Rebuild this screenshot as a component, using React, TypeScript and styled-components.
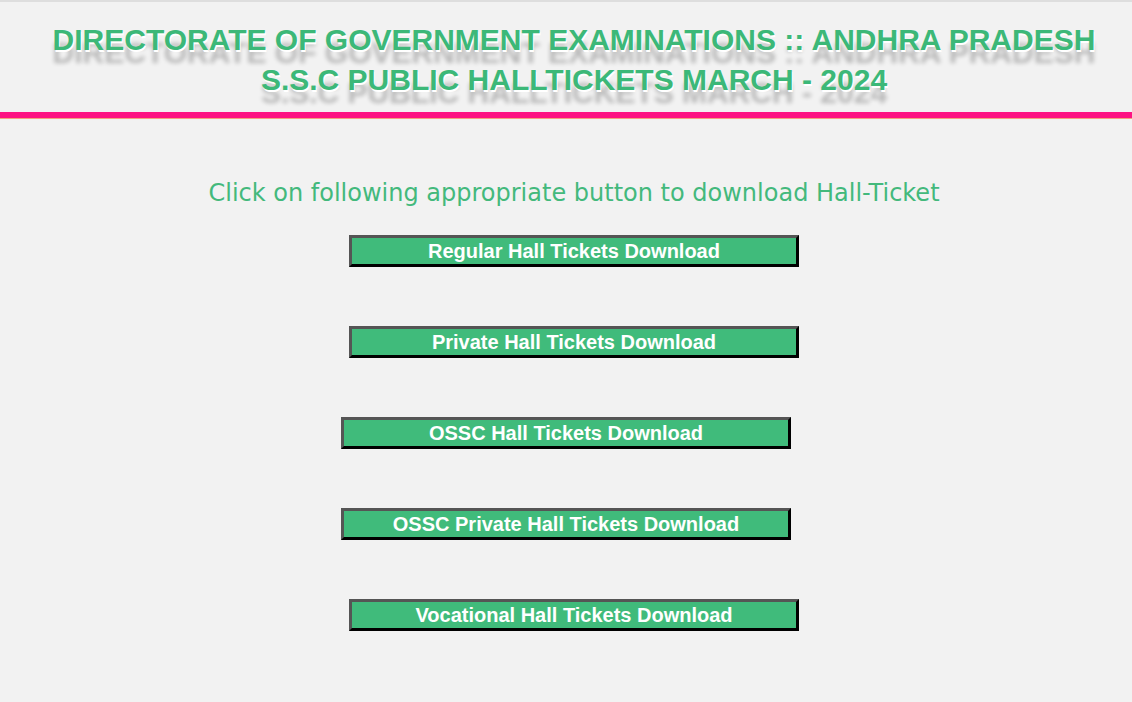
import styled, { createGlobalStyle } from "styled-components";

const GlobalStyle = createGlobalStyle`
  html, body {
    margin: 0;
    padding: 0;
    background: #f2f2f2;
  }
`;

const Page = styled.div`
  width: 100%;
  min-height: 702px;
  border-top: 2px solid #dedede;
  background: #f2f2f2;
`;

const Header = styled.header`
  height: 110px;
  padding-left: 16px;
  display: flex;
  flex-direction: column;
  justify-content: center;
  align-items: center;
  border-bottom: 6px solid #fd1383;
  box-shadow: 0 1px 0 #f2a27e;
`;

const Title = styled.h1`
  margin: 0;
  padding-top: 6px;
  font-family: "Liberation Sans", Arial, sans-serif;
  font-weight: bold;
  font-size: 30px;
  line-height: 40px;
  text-align: center;
  color: #3cb878;
  text-shadow: 1px 2px 0 #ffffff, 0 13px 4px rgba(0, 0, 0, 0.24);
`;

const Main = styled.main`
  padding: 60px 0 0 16px;
  display: flex;
  flex-direction: column;
  align-items: center;
`;

const Lead = styled.p`
  margin: 0 0 27px;
  font-family: "DejaVu Sans", Verdana, sans-serif;
  font-size: 24px;
  line-height: 30px;
  color: #43b97c;
`;

const ButtonList = styled.div`
  display: flex;
  flex-direction: column;
  align-items: center;
  gap: 59px;
`;

const DownloadButton = styled.button<{ $shift?: boolean }>`
  width: 450px;
  height: 32px;
  margin-left: ${({ $shift }) => ($shift ? "-16px" : "0")};
  padding: 0;
  background: #40bb7b;
  border-style: solid;
  border-width: 3px;
  border-color: #555555 #000000 #000000 #555555;
  font-family: "Liberation Sans", Arial, sans-serif;
  font-weight: bold;
  font-size: 20px;
  color: #ffffff;
  cursor: pointer;
`;

const buttons = [
  { label: "Regular Hall Tickets Download", shift: false },
  { label: "Private Hall Tickets Download", shift: false },
  { label: "OSSC Hall Tickets Download", shift: true },
  { label: "OSSC Private Hall Tickets Download", shift: true },
  { label: "Vocational Hall Tickets Download", shift: false },
];

export default function App() {
  return (
    <>
      <GlobalStyle />
      <Page>
        <Header>
          <Title>
            DIRECTORATE OF GOVERNMENT EXAMINATIONS :: ANDHRA PRADESH
            <br />
            S.S.C PUBLIC HALLTICKETS MARCH - 2024
          </Title>
        </Header>
        <Main>
          <Lead>Click on following appropriate button to download Hall-Ticket</Lead>
          <ButtonList>
            {buttons.map((b) => (
              <DownloadButton key={b.label} $shift={b.shift}>
                {b.label}
              </DownloadButton>
            ))}
          </ButtonList>
        </Main>
      </Page>
    </>
  );
}
